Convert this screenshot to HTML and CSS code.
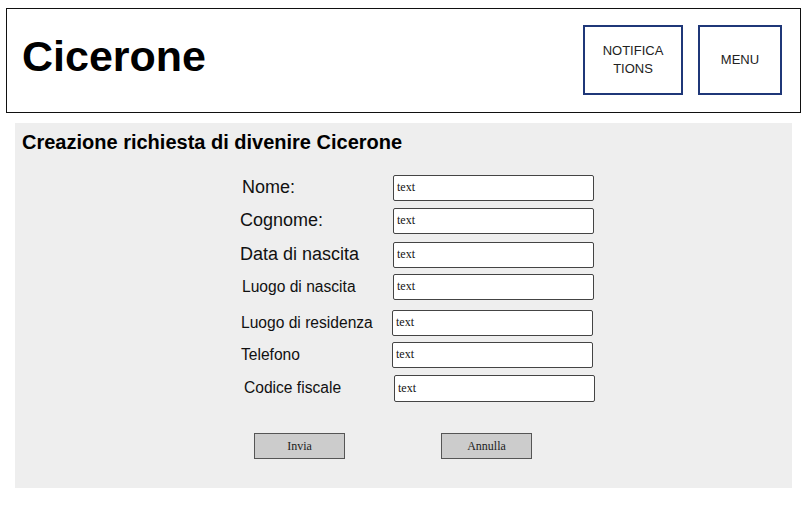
FILE: index.html
```html
<!DOCTYPE html>
<html lang="it">
<head>
<meta charset="utf-8">
<title>Cicerone</title>
<link rel="stylesheet" href="styles.css">
</head>
<body>
<header class="topbar">
  <h1 class="brand">Cicerone</h1>
  <div class="actions">
    <div class="nav-btn notif">NOTIFICA<br>TIONS</div>
    <div class="nav-btn menu">MENU</div>
  </div>
</header>
<main class="panel">
  <h2 class="panel-title">Creazione richiesta di divenire Cicerone</h2>
  <form class="form">
    <div class="row r1"><label class="lbl big">Nome:</label><div class="field">text</div></div>
    <div class="row r2"><label class="lbl big shift-l">Cognome:</label><div class="field">text</div></div>
    <div class="row r3"><label class="lbl big shift-l">Data di nascita</label><div class="field">text</div></div>
    <div class="row r4"><label class="lbl small">Luogo di nascita</label><div class="field">text</div></div>
    <div class="row r5"><label class="lbl small shift-s">Luogo di residenza</label><div class="field shift-fl">text</div></div>
    <div class="row r6"><label class="lbl small shift-s">Telefono</label><div class="field shift-fl">text</div></div>
    <div class="row r7"><label class="lbl small shift-r">Codice fiscale</label><div class="field tall shift-fr">text</div></div>
    <div class="buttons">
      <div class="btn">Invia</div>
      <div class="btn">Annulla</div>
    </div>
  </form>
</main>
</body>
</html>
```
FILE: styles.css
```css
* { box-sizing: border-box; }
html, body { margin: 0; padding: 0; background: #fff; }
body {
  font-family: "Liberation Sans", Arial, sans-serif;
  color: #000;
  width: 811px;
  height: 508px;
  overflow: hidden;
}
.topbar {
  margin: 8px 0 0 6px;
  width: 795px;
  height: 105px;
  border: 1px solid #111;
  display: flex;
  align-items: center;
  justify-content: space-between;
  padding: 0 18px 0 15px;
}
.brand {
  margin: 0 0 9px 0;
  font-size: 43px;
  font-weight: bold;
  line-height: 50px;
}
.actions {
  display: flex;
  gap: 15px;
  margin-bottom: 2px;
}
.nav-btn {
  height: 70px;
  border: 2px solid #1f3778;
  display: flex;
  align-items: center;
  justify-content: center;
  text-align: center;
  font-size: 13px;
  line-height: 18px;
  color: #222;
}
.notif { width: 100px; }
.menu { width: 84px; }
.panel {
  margin: 10px 0 0 15px;
  width: 777px;
  height: 365px;
  background: #eeeeee;
  padding: 8px 0 0 7px;
}
.panel-title {
  margin: 0;
  font-size: 20px;
  font-weight: bold;
  line-height: 23px;
}
.form {
  margin: 21px 0 0 219px;
}
.row {
  display: flex;
  align-items: center;
  height: 25px;
}
.r2 { margin-top: 8px; }
.r3 { margin-top: 9px; }
.r4 { margin-top: 7px; }
.r5 { margin-top: 11px; }
.r6 { margin-top: 7px; }
.r7 { margin-top: 8px; height: 26px; }
.lbl {
  width: 152px;
  white-space: nowrap;
  color: #111;
}
.big { font-size: 18px; padding-left: 1px; }
.shift-l { padding-left: 0; margin-left: -1px; margin-right: 1px; }
.small { font-size: 15.6px; padding-left: 1px; }
.shift-s { padding-left: 0; }
.shift-r { padding-left: 3px; }
.field {
  width: 201px;
  height: 26px;
  background: #fff;
  border: 1.5px solid #444;
  border-radius: 2px;
  font-family: "Liberation Serif", "Times New Roman", serif;
  font-size: 12px;
  color: #111;
  padding-left: 3px;
  display: flex;
  align-items: center;
}
.shift-fl { margin-left: -1px; }
.shift-fr { margin-left: 1px; }
.tall { height: 27px; }
.buttons {
  display: flex;
  gap: 96px;
  margin: 32px 0 0 13px;
}
.btn {
  width: 91px;
  height: 26px;
  background: #cccccc;
  border: 1.5px solid #555;
  font-family: "Liberation Serif", "Times New Roman", serif;
  font-size: 12px;
  color: #222;
  display: flex;
  align-items: center;
  justify-content: center;
}
```
